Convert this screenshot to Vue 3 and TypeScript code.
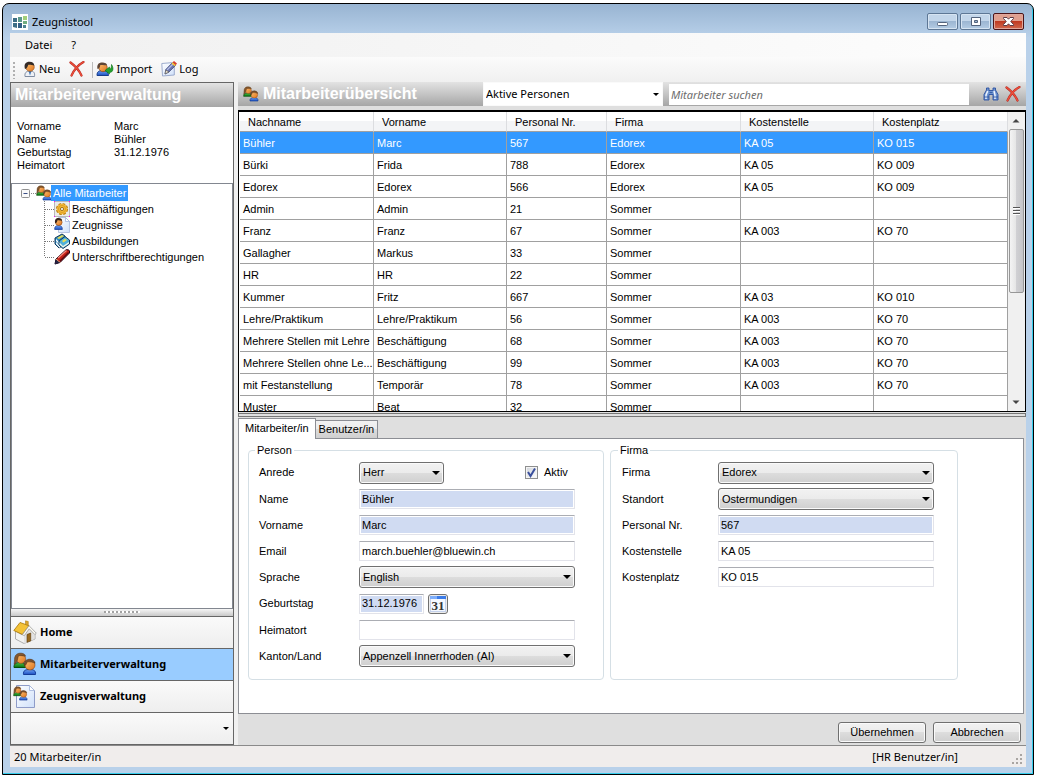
<script setup lang="ts">
import { ref } from 'vue'

interface Employee {
  last: string
  first: string
  nr: string
  company: string
  centre: string
  unit: string
}

const employees: Employee[] = [
  { last: 'Bühler', first: 'Marc', nr: '567', company: 'Edorex', centre: 'KA 05', unit: 'KO 015' },
  { last: 'Bürki', first: 'Frida', nr: '788', company: 'Edorex', centre: 'KA 05', unit: 'KO 009' },
  { last: 'Edorex', first: 'Edorex', nr: '566', company: 'Edorex', centre: 'KA 05', unit: 'KO 009' },
  { last: 'Admin', first: 'Admin', nr: '21', company: 'Sommer', centre: '', unit: '' },
  { last: 'Franz', first: 'Franz', nr: '67', company: 'Sommer', centre: 'KA 003', unit: 'KO 70' },
  { last: 'Gallagher', first: 'Markus', nr: '33', company: 'Sommer', centre: '', unit: '' },
  { last: 'HR', first: 'HR', nr: '22', company: 'Sommer', centre: '', unit: '' },
  { last: 'Kummer', first: 'Fritz', nr: '667', company: 'Sommer', centre: 'KA 03', unit: 'KO 010' },
  { last: 'Lehre/Praktikum', first: 'Lehre/Praktikum', nr: '56', company: 'Sommer', centre: 'KA 003', unit: 'KO 70' },
  { last: 'Mehrere Stellen mit Lehre', first: 'Beschäftigung', nr: '68', company: 'Sommer', centre: 'KA 003', unit: 'KO 70' },
  { last: 'Mehrere Stellen ohne Le...', first: 'Beschäftigung', nr: '99', company: 'Sommer', centre: 'KA 003', unit: 'KO 70' },
  { last: 'mit Festanstellung', first: 'Temporär', nr: '78', company: 'Sommer', centre: 'KA 003', unit: 'KO 70' },
  { last: 'Muster', first: 'Beat', nr: '32', company: 'Sommer', centre: '', unit: '' },
]
const selected = ref(0)

const summary = [
  ['Vorname', 'Marc'],
  ['Name', 'Bühler'],
  ['Geburtstag', '31.12.1976'],
  ['Heimatort', ''],
]
const branches = [
  { label: 'Beschäftigungen', icon: 'gear' },
  { label: 'Zeugnisse', icon: 'certificate' },
  { label: 'Ausbildungen', icon: 'books' },
  { label: 'Unterschriftberechtigungen', icon: 'marker' },
]
const modules = [
  { label: 'Home', icon: 'house' },
  { label: 'Mitarbeiterverwaltung', icon: 'people' },
  { label: 'Zeugnisverwaltung', icon: 'people-doc' },
]
const activeModule = ref(1)

const form = ref({
  salutation: 'Herr',
  active: true,
  name: 'Bühler',
  first: 'Marc',
  email: 'march.buehler@bluewin.ch',
  language: 'English',
  birthday: '31.12.1976',
  origin: '',
  canton: 'Appenzell Innerrhoden (AI)',
  company: 'Edorex',
  site: 'Ostermundigen',
  nr: '567',
  centre: 'KA 05',
  unit: 'KO 015',
})
</script>

<template>
  <svg class="defs" aria-hidden="true">
    <defs>
      <linearGradient id="skin" x1="0" y1="0" x2="1" y2="1">
        <stop offset="0" stop-color="#ffc070" /><stop offset="1" stop-color="#dd741f" />
      </linearGradient>
      <linearGradient id="blue" x1="0" y1="0" x2="0" y2="1">
        <stop offset="0" stop-color="#6fa4f5" /><stop offset="1" stop-color="#1c4fc0" />
      </linearGradient>
      <linearGradient id="green" x1="0" y1="0" x2="0" y2="1">
        <stop offset="0" stop-color="#4cc24c" /><stop offset="1" stop-color="#08700e" />
      </linearGradient>
      <linearGradient id="sheet" x1="0" y1="0" x2="1" y2="1">
        <stop offset="0" stop-color="#ffffff" /><stop offset="1" stop-color="#cfe0fa" />
      </linearGradient>
    </defs>
    <symbol id="logo" viewBox="0 0 16 16">
      <rect width="16" height="16" fill="#fff" />
      <path d="M1 4h4v4H1zM1 9h4v5l-4-1z" fill="#3c6d85" />
      <path d="M6 3h4v5H6z" fill="#5c9a8c" /><path d="M6 9h4v5H6z" fill="#315f86" />
      <path d="M11 2h4v4h-4z" fill="#a2cf7a" /><path d="M11 7h4v3h-4z" fill="#70ad80" /><path d="M11 11h3v3h-3z" fill="#4c8290" />
    </symbol>
    <symbol id="person" viewBox="0 0 16 16">
      <path d="M4 15.500c-.5-3.500 1-5.500 5-5.500s5 2 4.500 5.500z" fill="#eef1f6" stroke="#7e8ba0" />
      <path d="M7.500 10l1.500 4.500 1.500-4.500z" fill="#3f78b8" />
      <circle cx="9" cy="6" r="4.300" fill="url(#skin)" stroke="#9a5218" stroke-width=".6" />
      <path d="M4 8C2.500 3 5 .7 8.500.7c3 0 4.800 1.500 4.800 4-1.500-.7-4-1-6-.9C6.500 5.500 6 8 4 8z" fill="#332a26" />
    </symbol>
    <symbol id="cross" viewBox="0 0 16 16">
      <path d="M1.500 1.500C5 4 10 9 12.500 14.500M14.500 1C9 4 5 9 2.500 14.500" fill="none" stroke="#b52a20" stroke-width="2.200" stroke-linecap="round" />
      <path d="M1.500 1.500C5 4 10 9 12.500 14.500M14.500 1C9 4 5 9 2.500 14.500" fill="none" stroke="#ee4f3c" stroke-width="1.300" stroke-linecap="round" />
    </symbol>
    <symbol id="import" viewBox="0 0 18 16">
      <path d="M1 14.500c0-4 2-5 5.500-5s6 1.500 6 5z" fill="url(#blue)" stroke="#173d8c" />
      <circle cx="7" cy="6.500" r="4.200" fill="url(#skin)" stroke="#8a4310" stroke-width=".7" />
      <path d="M1.500 8C.5 3.500 3 1.500 6 1.500s5 1 5 2.800C8 4 6 3.700 4.300 4 4 6 3.500 7.500 1.500 8z" fill="#5f4636" />
      <path d="M9 9.500L13.500 6v2c1.500 0 2-1.500 2-4.500 2.700 4 1.500 8-2 8V13z" fill="#24a12d" stroke="#087013" stroke-width=".6" />
    </symbol>
    <symbol id="log" viewBox="0 0 16 16">
      <path d="M.8 2.500l9.500-.8 3 .3v12L1.500 15z" fill="url(#sheet)" stroke="#93a4c8" stroke-width=".9" />
      <path d="M4 13l.8-4.500L11 2l3.500 2.500L8 11z" fill="#6874ae" stroke="#3a4274" stroke-width=".7" />
      <path d="M6 9l6-6" stroke="#b4bde4" stroke-width="1.200" />
      <path d="M4 13l.8-4L8 11z" fill="#e4dcc8" stroke="#444" stroke-width=".5" />
      <path d="M11.500 1.500L13 0l3 2.500-1.300 1.700z" fill="#d8402e" /><path d="M10.500 2.500l1-1L14.700 4l-1 1.200z" fill="#f5c42d" />
    </symbol>
    <symbol id="people" viewBox="0 0 24 24">
      <path d="M1 15.500C.8 12 3 10.500 7 10.500s6 1.500 5.500 5z" fill="url(#green)" stroke="#064f0b" />
      <circle cx="8" cy="6.800" r="4.600" fill="url(#skin)" stroke="#8a4310" stroke-width=".6" />
      <path d="M1 12.500C2 9 .8 6 2.500 3.500 4 1.500 6 1 8.300 1.200c2.500.2 4 1.300 4.200 3C10 3.800 7.500 3.400 5.500 3.800 4.500 6 4.500 11.500 1 12.500z" fill="#84582f" stroke="#4d2d12" stroke-width=".5" />
      <path d="M10.500 22.500c-.5-4 2-5 6-5s6.500 1 6 5z" fill="url(#blue)" stroke="#143c98" />
      <circle cx="17" cy="13" r="5" fill="url(#skin)" stroke="#8a4310" stroke-width=".6" />
      <path d="M11.300 13.500c-1-4.200 2-6.300 5.500-6.300 3 0 5.300 1.700 5.200 4-2-1-5-1.500-7.700-1.400-.8 1.700-1.200 3.700-3 3.700z" fill="#7a4f2d" stroke="#4d2d12" stroke-width=".5" />
    </symbol>
    <symbol id="people-doc" viewBox="0 0 24 24">
      <path d="M3.500 1.500h13l5 5v17h-18z" fill="url(#sheet)" stroke="#8f9cc8" />
      <path d="M16.500 1.500v5h5z" fill="#fff" stroke="#9fb2da" stroke-width=".8" />
      <use href="#people" x="0" y="2" width="15" height="15" />
    </symbol>
    <symbol id="house" viewBox="0 0 24 24">
      <path d="M2.500 11l7 4 6-8 6.500 6v6L11 23.500 2.500 19z" fill="#f2f2f1" stroke="#9c9c9c" stroke-width=".8" />
      <path d="M11 23.500V15l5-6.500 5.500 5V19z" fill="#e2e2e2" />
      <path d="M14 14.500l3.700-1.500v8L14 22.300z" fill="#9a6a1e" stroke="#5c3906" stroke-width=".6" />
      <path d="M.8 10.500L7 2.500l9 3.200L9.500 14.500z" fill="#f4c236" stroke="#a87500" stroke-width=".8" />
      <path d="M9.500 14.500L16 5.700l7.300 7.500-1.500 1.300-5.600-5.700-5 7z" fill="#fffdf4" stroke="#9c9c9c" stroke-width=".8" />
      <path d="M12.500.8l2.800.7v3.800l-2.800-1z" fill="#dca52c" stroke="#a87500" stroke-width=".5" />
    </symbol>
    <symbol id="gear" viewBox="0 0 16 16">
      <rect x=".5" y=".5" width="15" height="15" fill="#ececec" stroke="#b9b9b9" />
      <circle cx="8" cy="8" r="5.300" fill="#f3b62b" stroke="#bf8413" stroke-width="1.600" stroke-dasharray="2.700 1.460" />
      <circle cx="8" cy="8" r="5" fill="#f4b93a" /><circle cx="8" cy="8" r="3.600" fill="none" stroke="#d79a20" stroke-width=".8" />
      <circle cx="8" cy="8" r="1.600" fill="#efefef" stroke="#8f5e05" stroke-width=".8" />
      <path d="M0 0h1v1H0zM15 0h1v1h-1zM0 15h1v1H0zM15 15h1v1h-1z" fill="#f0f" />
    </symbol>
    <symbol id="certificate" viewBox="0 0 16 16">
      <path d="M4.500.5h7l4 4v11h-11z" fill="url(#sheet)" stroke="#b6c4e2" /><path d="M11.500.5v4h4z" fill="#fff" stroke="#9aaed8" stroke-width=".7" />
      <path d="M.7 12.500c-.3-2.500 1-4 3.800-4s4 1.500 3.800 4z" fill="url(#blue)" stroke="#143c98" stroke-width=".7" />
      <circle cx="4.800" cy="5.200" r="3.300" fill="url(#skin)" stroke="#8a4310" stroke-width=".6" />
      <path d="M1.200 6.300C.3 2.500 2 .9 4.500.9S8.200 2 8 3.700C6.500 3.300 5 3 3.500 3.200c-.3 1.500-.8 3.100-2.300 3.100z" fill="#38251c" />
    </symbol>
    <symbol id="books" viewBox="0 0 16 16">
      <path d="M1 5l7-4 3 2v8l-6 4-4-4z" fill="#2e8bc1" stroke="#12395d" />
      <path d="M2 9l4 4v2l-4-4zM2 6l4 4v2L2 8z" fill="#fff" />
      <path d="M5 8l6-4.500L15.500 7v4L9 15.500 5 12z" fill="#4fb0da" stroke="#12395d" />
      <path d="M5.500 9.500L9 13l6-4v1.500L9 14.500l-3.500-3z" fill="#f7f7e6" /><path d="M3 5l5-3 2 1-5 3zM8 8l3-2.300L13 7l-3.500 2.500z" fill="#e6dc55" />
    </symbol>
    <symbol id="marker" viewBox="0 0 16 16">
      <path d="M1 15l1-5L12 .8h2.500L15.500 2v2L6 13.500z" fill="#c32018" stroke="#14041a" />
      <path d="M4 9l8.500-7.500" stroke="#f58a7d" stroke-width="1.300" /><path d="M6 12l8.500-8.500" stroke="#620b10" stroke-width="1.300" />
      <path d="M.8 15.200l1.200-5 4 3.300z" fill="#252344" /><path d="M2 10l2 1.500 2 2" stroke="#e6b87e" fill="none" />
    </symbol>
    <symbol id="binoculars" viewBox="0 0 16 16">
      <path d="M1 14V8.500L3.500 4V2H6v2.500h4V2h2.500v2L15 8.500V14h-5V8.500H6V14z" fill="#6d93cf" stroke="#2a50a0" stroke-width=".9" />
      <path d="M3 13V9l1.700-4M12 13V9l-1-4" stroke="#eff5ff" stroke-width="1.500" fill="none" />
      <path d="M1 11h5M10 11h5M6.500 6.500h3" stroke="#2a50a0" stroke-width=".8" />
    </symbol>
    <symbol id="calendar" viewBox="0 0 16 16">
      <rect x=".5" y=".5" width="15" height="15" fill="#f4f8ff" stroke="#c5d2ec" />
      <rect width="16" height="3" fill="#3c7ce8" /><rect width="7" height="3" fill="#7eaefa" />
    </symbol>
  </svg>

  <div class="window">
    <header class="titlebar">
      <svg class="i16"><use href="#logo" /></svg>
      <h1>Zeugnistool</h1>
      <div class="caption">
        <button aria-label="Minimieren"><svg viewBox="0 0 29 15"><rect x="9.500" y="8.500" width="10" height="3" rx="1" fill="#fff" stroke="#53637c" /></svg></button>
        <button aria-label="Maximieren"><svg viewBox="0 0 29 15"><path d="M10.500 3.500h9v8h-9zM13.500 6.500v2h3v-2z" fill="#fff" fill-rule="evenodd" stroke="#53637c" /></svg></button>
        <button class="close" aria-label="Schliessen"><svg viewBox="0 0 29 15"><path d="M9.500 3.500h3.500l1.500 1.700L16 3.500h3.500v1l-2.700 3 2.700 3v1H16l-1.500-1.700L13 11.500H9.500v-1l2.700-3-2.700-3z" fill="#fff" stroke="#5d3c46" /></svg></button>
      </div>
    </header>

    <nav class="menubar"><button>Datei</button><button>?</button></nav>

    <div class="toolbar">
      <svg class="grip" viewBox="0 0 4 18"><path d="M2 1v17" stroke="#b0b0b0" stroke-width="2" stroke-dasharray="2 2" /></svg>
      <button><svg class="i16"><use href="#person" /></svg>Neu</button>
      <button aria-label="Löschen"><svg class="i16"><use href="#cross" /></svg></button>
      <span class="sep"></span>
      <button><svg class="i18"><use href="#import" /></svg>Import</button>
      <button><svg class="i16"><use href="#log" /></svg>Log</button>
    </div>

    <div class="body">
      <aside class="side">
        <h2 class="heading">Mitarbeiterverwaltung</h2>
        <dl class="summary">
          <template v-for="row in summary" :key="row[0]"><dt>{{ row[0] }}</dt><dd>{{ row[1] }}</dd></template>
        </dl>
        <ul class="tree">
          <li>
            <div class="node">
              <svg class="expander" viewBox="0 0 15 16"><rect x=".5" y="4.500" width="8" height="8" rx="1" fill="#fafafa" stroke="#919191" /><path d="M2.500 8.500h4" stroke="#3b4f86" /><path d="M10 8.500h5" stroke="#888" stroke-dasharray="1 1" /></svg>
              <svg class="i16"><use href="#people" /></svg>
              <span class="chosen">Alle Mitarbeiter</span>
            </div>
            <ul>
              <li v-for="(b, i) in branches" :key="b.label" class="node">
                <svg class="branch" viewBox="0 0 10 16"><path :d="i === branches.length - 1 ? 'M.5 0v8' : 'M.5 0v16'" stroke="#777" stroke-dasharray="1 1" /><path d="M1 8.500h9" stroke="#777" stroke-dasharray="1 1" /></svg>
                <svg class="i16"><use :href="'#' + b.icon" /></svg>
                <span>{{ b.label }}</span>
              </li>
            </ul>
          </li>
        </ul>
        <div class="splitter"><span></span></div>
        <nav class="modules">
          <button v-for="(m, i) in modules" :key="m.label" :class="{ active: i === activeModule }" @click="activeModule = i">
            <svg class="i24"><use :href="'#' + m.icon" /></svg>{{ m.label }}
          </button>
          <button class="more" aria-label="Weitere Module"><span class="arrow"></span></button>
        </nav>
      </aside>

      <main class="main">
        <div class="bar">
          <svg class="i16"><use href="#people" /></svg>
          <h2>Mitarbeiterübersicht</h2>
          <div class="pick filter">
            <select aria-label="Filter"><option>Aktive Personen</option><option>Alle Personen</option></select>
            <span class="arrow"></span>
          </div>
          <input class="search" type="text" placeholder="Mitarbeiter suchen" aria-label="Mitarbeiter suchen" />
          <button aria-label="Suchen"><svg class="i16"><use href="#binoculars" /></svg></button>
          <button aria-label="Suche löschen"><svg class="i16"><use href="#cross" /></svg></button>
        </div>

        <div class="grid">
          <div class="rows">
            <table>
              <colgroup><col class="wide" /><col class="mid" /><col class="short" /><col class="wide" /><col class="mid" /><col class="wide" /></colgroup>
              <thead>
                <tr><th>Nachname</th><th>Vorname</th><th>Personal Nr.</th><th>Firma</th><th>Kostenstelle</th><th>Kostenplatz</th></tr>
              </thead>
              <tbody>
                <tr v-for="(e, i) in employees" :key="e.nr" :class="{ picked: i === selected }" @click="selected = i">
                  <td>{{ e.last }}</td><td>{{ e.first }}</td><td>{{ e.nr }}</td><td>{{ e.company }}</td><td>{{ e.centre }}</td><td>{{ e.unit }}</td>
                </tr>
              </tbody>
            </table>
          </div>
          <div class="scroll">
            <svg viewBox="0 0 16 16"><path d="M4.500 10L8 6.500l3.500 3.500z" fill="#444" /></svg>
            <div class="thumb"><i></i><i></i><i></i></div>
            <svg viewBox="0 0 16 16"><path d="M4.500 6L8 9.500 11.500 6z" fill="#444" /></svg>
          </div>
        </div>

        <div class="divider"></div>

        <div class="tabs" role="tablist">
          <button role="tab" class="current" aria-selected="true">Mitarbeiter/in</button>
          <button role="tab" aria-selected="false">Benutzer/in</button>
        </div>

        <form class="page" @submit.prevent>
          <fieldset class="person">
            <legend>Person</legend>
            <div class="field first">
              <label for="salutation">Anrede</label>
              <div class="pick small"><select id="salutation" v-model="form.salutation"><option>Herr</option><option>Frau</option></select><span class="arrow"></span></div>
              <label class="check"><input v-model="form.active" type="checkbox" /><svg viewBox="0 0 13 13"><path d="M3 6l2.500 4L10 2.500" fill="none" stroke="#3a4f9c" stroke-width="2" /></svg>Aktiv</label>
            </div>
            <div class="field"><label for="name">Name</label><input id="name" v-model="form.name" class="required" type="text" /></div>
            <div class="field"><label for="first">Vorname</label><input id="first" v-model="form.first" class="required" type="text" /></div>
            <div class="field"><label for="email">Email</label><input id="email" v-model="form.email" type="text" /></div>
            <div class="field">
              <label for="language">Sprache</label>
              <div class="pick"><select id="language" v-model="form.language"><option>English</option><option>Deutsch</option></select><span class="arrow"></span></div>
            </div>
            <div class="field date">
              <label for="birthday">Geburtstag</label><input id="birthday" v-model="form.birthday" class="required" type="text" />
              <button type="button" class="cal" aria-label="Datum wählen"><svg viewBox="0 0 16 16"><use href="#calendar" /><text x="8" y="14" text-anchor="middle">31</text></svg></button>
            </div>
            <div class="field"><label for="origin">Heimatort</label><input id="origin" v-model="form.origin" type="text" /></div>
            <div class="field">
              <label for="canton">Kanton/Land</label>
              <div class="pick"><select id="canton" v-model="form.canton"><option>Appenzell Innerrhoden (AI)</option><option>Bern (BE)</option></select><span class="arrow"></span></div>
            </div>
          </fieldset>

          <fieldset class="company">
            <legend>Firma</legend>
            <div class="field first">
              <label for="company">Firma</label>
              <div class="pick"><select id="company" v-model="form.company"><option>Edorex</option><option>Sommer</option></select><span class="arrow"></span></div>
            </div>
            <div class="field">
              <label for="site">Standort</label>
              <div class="pick"><select id="site" v-model="form.site"><option>Ostermundigen</option><option>Bern</option></select><span class="arrow"></span></div>
            </div>
            <div class="field"><label for="nr">Personal Nr.</label><input id="nr" v-model="form.nr" class="required" type="text" /></div>
            <div class="field"><label for="centre">Kostenstelle</label><input id="centre" v-model="form.centre" type="text" /></div>
            <div class="field"><label for="unit">Kostenplatz</label><input id="unit" v-model="form.unit" type="text" /></div>
          </fieldset>
        </form>

        <div class="actions"><button>Übernehmen</button><button>Abbrechen</button></div>
      </main>
    </div>

    <footer class="status">
      <span>20 Mitarbeiter/in</span>
      <span class="user">[HR Benutzer/in]</span>
      <svg viewBox="0 0 11 11"><path d="M8 0h2v2H8zM4 4h2v2H4zM8 4h2v2H8zM0 8h2v2H0zM4 8h2v2H4zM8 8h2v2H8z" fill="#a9a5a2" /></svg>
    </footer>
  </div>
</template>

<style>
body {
  margin: 0;
  background: #fff;
}
</style>

<style scoped>
* {
  box-sizing: border-box;
}
.defs {
  position: absolute;
  width: 0;
  height: 0;
}
svg {
  display: block;
  flex: none;
}
button,
input,
select {
  margin: 0;
  padding: 0;
  border: 0;
  background: none;
  color: inherit;
  font: inherit;
  outline: none;
}
h1,
h2,
ul,
dl,
dd {
  margin: 0;
  padding: 0;
  list-style: none;
}
.i16 {
  width: 16px;
  height: 16px;
}
.i18 {
  width: 18px;
  height: 16px;
}
.i24 {
  width: 24px;
  height: 24px;
}
.arrow {
  border: 4px solid transparent;
  border-top-color: #000;
  border-bottom: 0;
}

.window {
  display: flex;
  flex-direction: column;
  height: calc(100vh - 8px);
  min-height: 700px;
  margin: 3px 6px 5px 2px;
  padding: 0 7px 7px;
  border: 1px solid #000;
  border-radius: 7px 7px 0 0;
  background: linear-gradient(#98b4d2, #b9d1ea 34px);
  box-shadow: inset -1px -1px #35cdec;
  color: #000;
  font: 11px/13px "Liberation Sans", Arial, sans-serif;
}
.titlebar,
.menubar,
.toolbar,
.status {
  display: flex;
  flex: none;
  align-items: center;
  font: 11px/16px "Noto Sans", "Segoe UI", sans-serif;
}
.titlebar {
  height: 29px;
  padding: 6px 2px 0;
  gap: 4px;
}
.titlebar h1 {
  flex: 1;
  font: inherit;
}
.caption {
  display: flex;
  align-items: center;
  gap: 2px;
}
.caption button {
  width: 31px;
  height: 17px;
  border: 1px solid #5d7795;
  border-radius: 2px;
  background: linear-gradient(#c3d6ea 45%, #9cb6d2 50%, #b4cce4);
  box-shadow: inset 0 0 0 1px #d6e4f2;
}
.caption .close {
  border-color: #4c1518;
  background: linear-gradient(#e0a08f 45%, #c03a22 50%, #d06a50);
  box-shadow: inset 0 0 0 1px #e0a79c;
}
.menubar {
  height: 24px;
  padding: 0 15px;
  gap: 19px;
  background: linear-gradient(90deg, #f0f0f0, #fdfdfd);
}
.toolbar {
  height: 25px;
  padding-left: 2px;
  background: linear-gradient(#fbfbfb, #f0f0f0);
}
.toolbar button {
  display: flex;
  align-items: center;
  gap: 2px;
  margin-right: 9px;
  padding-bottom: 1px;
}
.grip {
  width: 4px;
  height: 18px;
  margin-right: 5px;
}
.sep {
  width: 1px;
  height: 16px;
  margin-right: 3px;
  margin-left: -2px;
  background: #bcbcbc;
}

.body {
  display: flex;
  flex: 1;
  gap: 4px;
  min-height: 0;
  background: #f0f0f0;
}
.side {
  display: flex;
  flex: none;
  flex-direction: column;
  width: 224px;
  border: 1px solid #666;
  background: #fff;
}
.heading,
.bar {
  flex: none;
  height: 24px;
  background: linear-gradient(#e3e3e3, #a6a6a6);
  color: #fff;
}
.heading,
.bar h2 {
  font: bold 16px/24px "Liberation Sans", Arial, sans-serif;
}
.heading {
  padding-left: 4px;
}
.summary {
  display: grid;
  grid-template-columns: 97px 1fr;
  grid-auto-rows: 13px;
  height: 76px;
  padding: 13px 6px;
}
.tree {
  flex: 1;
  padding: 1px 0 0 9px;
  border: 1px solid #828790;
}
.node {
  display: flex;
  align-items: center;
  height: 16px;
}
.node span {
  padding: 2px 2px 1px;
}
.node .chosen {
  background: #39f;
  color: #fff;
  margin-left: -1px;
}
.tree ul {
  padding-left: 23px;
}
.expander {
  width: 15px;
  height: 16px;
}
.branch {
  width: 10px;
  height: 16px;
}
.splitter {
  display: flex;
  justify-content: center;
  height: 7px;
  padding-top: 2px;
  background: linear-gradient(#f6f6f6, #c9c9c9);
}
.splitter span {
  width: 36px;
  height: 2px;
  background: repeating-linear-gradient(90deg, #a2a2a2 0 2px, #fff 2px 4px);
}
.modules button {
  display: flex;
  align-items: center;
  width: 100%;
  height: 32px;
  padding: 0 0 2px 2px;
  gap: 3px;
  border-top: 1px solid #666;
  background: linear-gradient(#fafafa, #eee);
  font: bold 11px/16px "Noto Sans", Tahoma, sans-serif;
}
.modules .active {
  background: #9cf;
}
.modules .more {
  justify-content: flex-end;
  padding: 0 4px 0 0;
}
.more .arrow,
.filter .arrow {
  border-width: 3px 3px 0;
}

.main {
  display: flex;
  flex: 1;
  flex-direction: column;
  min-width: 0;
  background: #dfdfdf;
}
.bar {
  display: flex;
  align-items: center;
  padding: 0 5px;
  gap: 6px;
}
.bar h2 {
  flex: 1;
  margin-left: -2px;
}
.bar button {
  color: #000;
}
.pick {
  display: flex;
  position: relative;
  flex: none;
  width: 216px;
  height: 22px;
}
.pick select {
  width: 100%;
  padding: 0 20px 0 3px;
  border: 1px solid #707070;
  border-radius: 3px;
  appearance: none;
  background: linear-gradient(#f2f2f2, #ebebeb 50%, #ddd 50%, #cfcfcf);
  box-shadow: inset 0 0 0 1px #fafafa;
}
.pick .arrow {
  position: absolute;
  top: 9px;
  right: 4px;
  pointer-events: none;
}
.pick.small {
  width: 85px;
}
.filter.pick {
  width: 180px;
  height: 24px;
  color: #000;
  font: 11px/16px "Noto Sans", "Segoe UI", sans-serif;
}
.filter.pick .arrow {
  top: 11px;
}
.filter select {
  border: 0;
  border-radius: 0;
  background: #fff;
}
.search {
  width: 300px;
  height: 21px;
  margin-right: 8px;
  padding: 0 2px;
  background: #fff;
  color: #000;
  font: italic 11px/16px "Noto Sans", "Segoe UI", sans-serif;
}
.search::placeholder {
  color: #6d6d6d;
  opacity: 1;
}
.grid {
  display: flex;
  flex: 1;
  min-height: 0;
  margin: 4px 0 0;
  border: 1px solid #000;
  border-width: 2px 1px 1px;
  background: #fff;
}
.rows {
  flex: 1;
  min-width: 0;
  padding-left: 1px;
  overflow: hidden;
}
table {
  width: 100%;
  border-spacing: 0;
  table-layout: fixed;
}
.wide {
  width: 134px;
}
.mid {
  width: 133px;
}
.short {
  width: 100px;
}
th,
td {
  overflow: hidden;
  padding: 1px 0 0 3px;
  border-right: 1px solid #a0a0a0;
  border-bottom: 1px solid #a0a0a0;
  text-align: left;
  text-overflow: ellipsis;
  white-space: nowrap;
}
th {
  height: 20px;
  padding: 1px 0 0 8px;
  border-right-color: #dcdde0;
  background: linear-gradient(#fff 45%, #f3f4f6 50%, #f3f4f6);
  font-weight: normal;
}
td {
  height: 22px;
}
.picked td {
  background: #39f;
  color: #fff;
}
.scroll {
  display: flex;
  flex: none;
  flex-direction: column;
  width: 17px;
  padding: 0 1px 0 0;
  background: #f0f0f0;
}
.scroll svg {
  width: 16px;
  height: 17px;
}
.scroll svg:last-child {
  margin-top: auto;
}
.thumb {
  display: flex;
  flex: 0 1 55%;
  flex-direction: column;
  align-items: center;
  justify-content: center;
  gap: 1px;
  margin-left: 1px;
  border: 1px solid #979797;
  border-radius: 2px;
  background: linear-gradient(90deg, #f4f4f4, #e4e4e4 50%, #d0d0d3 50%, #c6c6c8);
}
.thumb i {
  width: 7px;
  height: 2px;
  border-bottom: 1px solid #fff;
  background: #555;
}
.divider {
  flex: none;
  height: 4px;
  margin: 1px 0;
  border: 1px solid #777;
}
.tabs {
  display: flex;
  flex: none;
  align-items: flex-end;
  height: 20px;
}
.tabs button {
  height: 18px;
  padding: 0 3px;
  border: 1px solid #8c8e94;
  border-width: 1px 1px 0 0;
  background: linear-gradient(#f2f2f2, #ebebeb 50%, #ddd 50%, #cfcfcf);
}
.tabs .current {
  height: 21px;
  margin-bottom: -1px;
  padding: 0 6px 2px;
  border-left-width: 1px;
  background: #fff;
  z-index: 1;
}
.page {
  display: flex;
  flex: none;
  align-items: stretch;
  height: 276px;
  padding: 5px 9px 33px;
  gap: 6px;
  margin-right: 2px;
  border: 1px solid #8c8e94;
  background: #fff;
}
fieldset {
  min-width: 0;
  margin: 0;
  padding: 2px 10px 0;
  border: 1px solid #d5dfe5;
  border-radius: 4px;
}
.person {
  flex: 0 1 356px;
}
.company {
  flex: 0 1 348px;
}
legend {
  margin-left: -4px;
  padding: 0 2px;
}
.field {
  display: flex;
  align-items: center;
  height: 26px;
}
.field.first {
  height: 27px;
}
.field.date {
  height: 27px;
}
.field > label:first-child {
  flex: none;
  width: 100px;
}
.company .field > label:first-child {
  width: 96px;
}
.company {
  padding-left: 11px;
}
.field > input {
  width: 216px;
  height: 20px;
  padding: 0 2px 1px;
  border: 1px solid #e2e3ea;
  border-top-color: #abadb3;
  border-radius: 1px;
  background: #fff;
}
.field > .required {
  background: #d0dbf2;
  box-shadow: inset 0 0 0 1px #fff;
}
.field.date > input {
  width: 65px;
}
.cal {
  width: 20px;
  height: 20px;
  margin-left: 4px;
  border: 1px solid #707070;
  border-radius: 3px;
  background: #ececec;
}
.cal svg {
  width: 16px;
  height: 16px;
  margin: 1px;
  fill: #333;
  font: bold 13px "Liberation Serif", serif;
}
.check {
  display: flex;
  position: relative;
  align-items: center;
  gap: 6px;
  margin-left: 81px;
}
.check input {
  width: 13px;
  height: 13px;
  border: 1px solid #8e8f8f;
  appearance: none;
  background: linear-gradient(135deg, #cfd3d9, #fff);
  box-shadow: inset 0 0 0 1px #f4f4f4;
}
.check svg {
  position: absolute;
  top: 0;
  left: 0;
  width: 13px;
  height: 13px;
  visibility: hidden;
}
.check input:checked + svg {
  visibility: visible;
}
.actions {
  display: flex;
  flex: none;
  align-items: center;
  justify-content: flex-end;
  height: 31px;
  padding: 6px 5px 0 0;
  gap: 7px;
}
.actions button {
  width: 88px;
  height: 21px;
  border: 1px solid #707070;
  border-radius: 3px;
  background: linear-gradient(#f2f2f2, #ebebeb 50%, #ddd 50%, #cfcfcf);
  box-shadow: inset 0 0 0 1px #fafafa;
}
.status {
  height: 22px;
  padding: 0 3px 0 4px;
  border-top: 1px solid #8a8a8a;
  background: #f0edec;
}
.status .user {
  margin: 0 54px 0 auto;
}
.status svg {
  width: 11px;
  height: 11px;
  align-self: flex-end;
  margin-bottom: 2px;
}
</style>
